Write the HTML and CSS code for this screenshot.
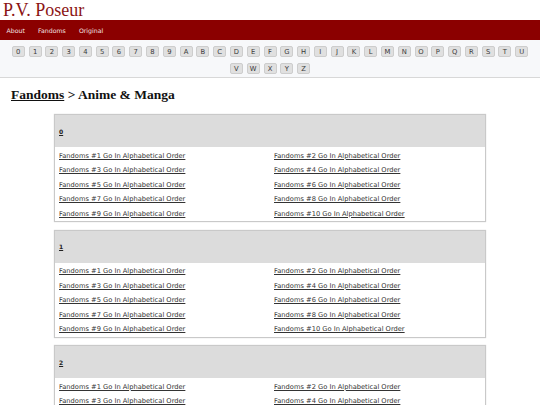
FILE: index.html
```html
<!DOCTYPE html>
<html>
<head>
<meta charset="utf-8">
<title>P.V. Poseur</title>
<link rel="stylesheet" href="styles.css">
</head>
<body>
<header class="site-header"><span class="site-title">P.V. Poseur</span></header>
<nav class="main-nav">
  <a href="#">About</a>
  <a href="#">Fandoms</a>
  <a href="#">Original</a>
</nav>
<div class="letters">
  <a class="letter" href="#">0</a><a class="letter" href="#">1</a><a class="letter" href="#">2</a><a class="letter" href="#">3</a><a class="letter" href="#">4</a><a class="letter" href="#">5</a><a class="letter" href="#">6</a><a class="letter" href="#">7</a><a class="letter" href="#">8</a><a class="letter" href="#">9</a><a class="letter" href="#">A</a><a class="letter" href="#">B</a><a class="letter" href="#">C</a><a class="letter" href="#">D</a><a class="letter" href="#">E</a><a class="letter" href="#">F</a><a class="letter" href="#">G</a><a class="letter" href="#">H</a><a class="letter" href="#">I</a><a class="letter" href="#">J</a><a class="letter" href="#">K</a><a class="letter" href="#">L</a><a class="letter" href="#">M</a><a class="letter" href="#">N</a><a class="letter" href="#">O</a><a class="letter" href="#">P</a><a class="letter" href="#">Q</a><a class="letter" href="#">R</a><a class="letter" href="#">S</a><a class="letter" href="#">T</a><a class="letter" href="#">U</a><a class="letter" href="#">V</a><a class="letter" href="#">W</a><a class="letter" href="#">X</a><a class="letter" href="#">Y</a><a class="letter" href="#">Z</a>
</div>
<main class="content">
  <h1 class="page-title"><a href="#">Fandoms</a> &gt; Anime &amp; Manga</h1>

  <section class="group">
    <div class="group-head"><a href="#">0</a></div>
    <ul class="group-list">
      <li><a href="#">Fandoms #1 Go In Alphabetical Order</a></li>
      <li><a href="#">Fandoms #2 Go In Alphabetical Order</a></li>
      <li><a href="#">Fandoms #3 Go In Alphabetical Order</a></li>
      <li><a href="#">Fandoms #4 Go In Alphabetical Order</a></li>
      <li><a href="#">Fandoms #5 Go In Alphabetical Order</a></li>
      <li><a href="#">Fandoms #6 Go In Alphabetical Order</a></li>
      <li><a href="#">Fandoms #7 Go In Alphabetical Order</a></li>
      <li><a href="#">Fandoms #8 Go In Alphabetical Order</a></li>
      <li><a href="#">Fandoms #9 Go In Alphabetical Order</a></li>
      <li><a href="#">Fandoms #10 Go In Alphabetical Order</a></li>
    </ul>
  </section>

  <section class="group">
    <div class="group-head"><a href="#">1</a></div>
    <ul class="group-list">
      <li><a href="#">Fandoms #1 Go In Alphabetical Order</a></li>
      <li><a href="#">Fandoms #2 Go In Alphabetical Order</a></li>
      <li><a href="#">Fandoms #3 Go In Alphabetical Order</a></li>
      <li><a href="#">Fandoms #4 Go In Alphabetical Order</a></li>
      <li><a href="#">Fandoms #5 Go In Alphabetical Order</a></li>
      <li><a href="#">Fandoms #6 Go In Alphabetical Order</a></li>
      <li><a href="#">Fandoms #7 Go In Alphabetical Order</a></li>
      <li><a href="#">Fandoms #8 Go In Alphabetical Order</a></li>
      <li><a href="#">Fandoms #9 Go In Alphabetical Order</a></li>
      <li><a href="#">Fandoms #10 Go In Alphabetical Order</a></li>
    </ul>
  </section>

  <section class="group">
    <div class="group-head"><a href="#">2</a></div>
    <ul class="group-list">
      <li><a href="#">Fandoms #1 Go In Alphabetical Order</a></li>
      <li><a href="#">Fandoms #2 Go In Alphabetical Order</a></li>
      <li><a href="#">Fandoms #3 Go In Alphabetical Order</a></li>
      <li><a href="#">Fandoms #4 Go In Alphabetical Order</a></li>
      <li><a href="#">Fandoms #5 Go In Alphabetical Order</a></li>
      <li><a href="#">Fandoms #6 Go In Alphabetical Order</a></li>
      <li><a href="#">Fandoms #7 Go In Alphabetical Order</a></li>
      <li><a href="#">Fandoms #8 Go In Alphabetical Order</a></li>
      <li><a href="#">Fandoms #9 Go In Alphabetical Order</a></li>
      <li><a href="#">Fandoms #10 Go In Alphabetical Order</a></li>
    </ul>
  </section>
</main>
</body>
</html>
```
FILE: styles.css
```css
html, body {
  margin: 0;
  padding: 0;
  background: #ffffff;
}
body {
  font-family: "DejaVu Sans", Verdana, sans-serif;
  color: #333;
}
.site-header {
  height: 20px;
  padding-left: 3px;
  background: #ffffff;
}
.site-title {
  font-family: "Liberation Serif", "Times New Roman", serif;
  font-size: 18px;
  line-height: 20px;
  color: #8b1414;
}
.main-nav {
  display: flex;
  height: 20px;
  align-items: center;
  background: #8b0000;
}
.main-nav a {
  padding: 0 6.6px;
  font-size: 6.2px;
  color: #f4e4e4;
  text-decoration: none;
}
.letters {
  display: flex;
  flex-wrap: wrap;
  justify-content: center;
  padding: 3px 6px 0;
  background: #f7f8fa;
  border-bottom: 1px solid #d8d8d8;
  height: 34px;
}
.letter {
  box-sizing: border-box;
  width: 13px;
  height: 11px;
  margin: 3px 1.9px;
  display: flex;
  align-items: center;
  justify-content: center;
  background: #e0e0e0;
  border: 1px solid #cdcdcd;
  border-radius: 2px;
  font-size: 6.8px;
  color: #3a3a3a;
  text-decoration: none;
}
.content {
  padding-top: 8px;
}
.page-title {
  margin: 0 0 10px 11px;
  font-family: "Liberation Serif", "Times New Roman", serif;
  font-size: 13.5px;
  line-height: 18px;
  font-weight: bold;
  color: #111;
}
.page-title a {
  color: #111;
  text-decoration: underline;
}
.group {
  width: 432px;
  box-sizing: border-box;
  margin: 0 auto 7.5px;
  border: 1px solid #c9c9c9;
  box-shadow: 0 0 1px #d0d0d0;
  background: #fff;
}
.group-head {
  height: 32px;
  display: flex;
  align-items: center;
  padding-left: 4px;
  background: #dcdcdc;
  font-size: 6px;
  font-weight: bold;
}
.group-head a {
  color: #222;
  text-decoration: underline;
}
.group-list {
  list-style: none;
  margin: 0;
  padding: 1.5px 0 0;
  display: grid;
  grid-template-columns: 1fr 1fr;
}
.group-list li {
  height: 14.5px;
  line-height: 14.5px;
  padding-left: 4px;
  font-size: 6.7px;
  white-space: nowrap;
}
.group-list a {
  color: #333;
  text-decoration: underline;
}
```
